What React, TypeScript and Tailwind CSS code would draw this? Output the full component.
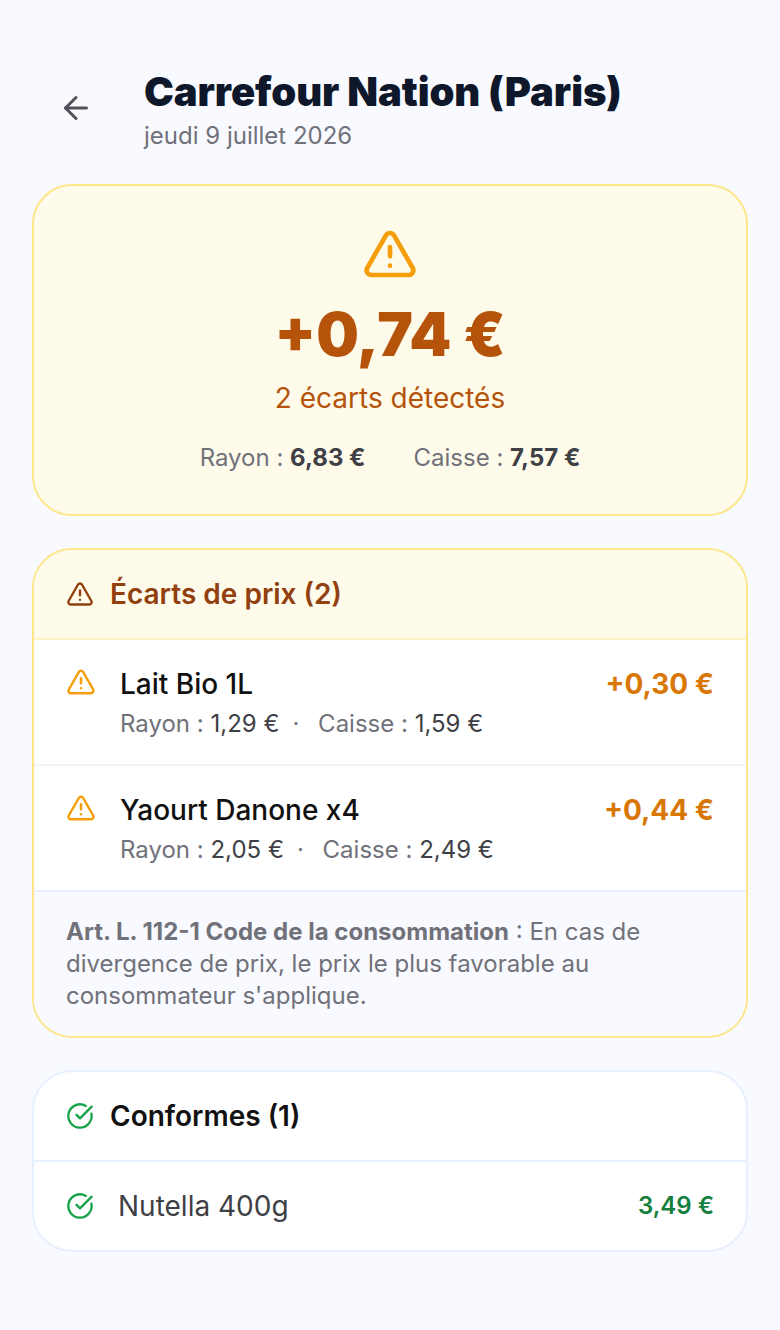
import { ArrowLeft, TriangleAlert, CircleCheckBig } from "lucide-react";

function Sep() {
  return <span className="mr-[12px] ml-[13px] text-[#71717a]">·</span>;
}

function GapRow({
  name,
  diff,
  rayon,
  caisse,
  last,
}: {
  name: string;
  diff: string;
  rayon: string;
  caisse: string;
  last?: boolean;
}) {
  return (
    <div
      className={
        last
          ? "flex h-[126px] items-start gap-[26px] border-b-2 border-[#e8f0fe] px-8 pt-[24px] pb-[22px]"
          : "flex h-[126px] items-start gap-[26px] border-b-2 border-[#f4f4f5] px-8 pt-[24px] pb-[22px]"
      }
    >
      <TriangleAlert className="mt-[3px] h-[30px] w-[30px] shrink-0 text-[#f59e0b]" strokeWidth={2} />
      <div className="-ml-[2px] flex-1">
        <div className="text-[28px] leading-[40px] font-medium text-[#111111]">{name}</div>
        <div className="text-[24px] leading-[40px] text-[#71717a] [font-feature-settings:'calt'_0]">
          Rayon : <span className="text-[#3f3f46]">{rayon}</span>
          <Sep /> Caisse : <span className="text-[#3f3f46]">{caisse}</span>
        </div>
      </div>
      <div className="text-[28px] leading-[40px] font-bold text-[#d97706]">{diff}</div>
    </div>
  );
}

export default function App() {
  return (
    <div className="min-h-[1330px] bg-[#f8faff] px-8 pt-[64px] font-['Inter',sans-serif]">
      <div className="flex items-center gap-[50px] pl-[26px]">
        <ArrowLeft className="h-9 w-9 shrink-0 text-[#52525b]" strokeWidth={2} />
        <div>
          <h1 className="text-[40px] leading-[56px] font-black tracking-[-0.08px] text-[#0f172a]">
            Carrefour Nation (Paris)
          </h1>
          <p className="text-[24px] leading-[32px] text-[#71717a]">jeudi 9 juillet 2026</p>
        </div>
      </div>

      <section className="mt-[32px] flex h-[332px] flex-col items-center rounded-[40px] border-2 border-[#fde68a] bg-[#fffbeb] pt-[40px]">
        <TriangleAlert className="h-14 w-14 text-[#f59e0b]" strokeWidth={2} />
        <div className="mt-[16px] text-[60px] leading-[72px] font-black text-[#b45309]">+0,74 €</div>
        <div className="mt-[6px] text-[28px] leading-[44px] text-[#b45309]">2 écarts détectés</div>
        <div className="mt-[18px] flex gap-[48px] text-[24px] leading-[40px] text-[#71717a]">
          <span>
            Rayon : <b className="font-bold text-[#3f3f46]">6,83 €</b>
          </span>
          <span>
            Caisse : <b className="font-bold text-[#3f3f46]">7,57 €</b>
          </span>
        </div>
      </section>

      <section className="mt-[32px] overflow-hidden rounded-[40px] border-2 border-[#fde68a] bg-white">
        <div className="flex h-[90px] items-center gap-4 border-b-2 border-[#fef3c7] bg-[#fffbeb] px-8">
          <TriangleAlert className="h-7 w-7 text-[#92400e]" strokeWidth={2} />
          <span className="text-[28px] font-semibold text-[#92400e]">Écarts de prix (2)</span>
        </div>
        <GapRow name="Lait Bio 1L" diff="+0,30 €" rayon="1,29 €" caisse="1,59 €" />
        <GapRow name="Yaourt Danone x4" diff="+0,44 €" rayon="2,05 €" caisse="2,49 €" last />
        <div className="bg-[#f8faff] px-8 pt-[24px] pb-[24px] text-[24px] leading-[32px] text-[#71717a]">
          <b className="font-bold">Art. L. 112-1 Code de la consommation</b> : En cas de divergence de prix, le prix
          le plus favorable au consommateur s'applique.
        </div>
      </section>

      <section className="mt-[32px] overflow-hidden rounded-[40px] border-2 border-[#e8f0fe] bg-white">
        <div className="flex h-[90px] items-center gap-4 border-b-2 border-[#e8f0fe] px-8">
          <CircleCheckBig className="h-7 w-7 text-[#16a34a]" strokeWidth={2} />
          <span className="text-[28px] font-semibold text-[#111111]">Conformes (1)</span>
        </div>
        <div className="flex h-[88px] items-center px-8">
          <CircleCheckBig className="h-7 w-7 text-[#16a34a]" strokeWidth={2} />
          <span className="ml-6 flex-1 text-[28px] text-[#3f3f46]">Nutella 400g</span>
          <span className="text-[24px] font-semibold text-[#15803d]">3,49 €</span>
        </div>
      </section>
    </div>
  );
}
